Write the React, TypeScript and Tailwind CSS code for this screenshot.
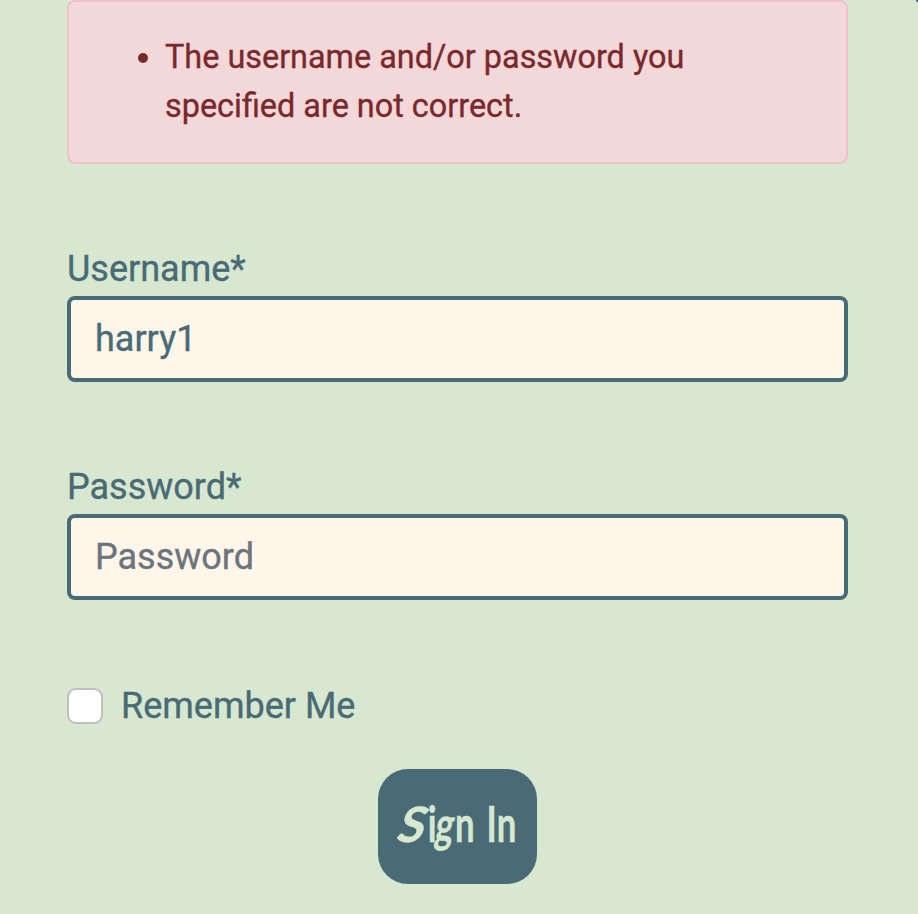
export default function App() {
  return (
    <main className="relative h-[914px] w-[918px] overflow-hidden bg-[#d8e7d0] pl-[67px] font-[Roboto,sans-serif] text-[36px] leading-[54px] text-[#486b76] [-webkit-text-stroke:0.35px]">
      <span className="absolute -right-px -top-px size-[3px] rounded-full bg-[#486b76]" />
      <div className="h-[164px] w-[781px] rounded-lg border-2 border-[#efc2c7] bg-[#f3d8da] pl-[96px] pt-[31px] text-[32.4px] leading-[49px] text-[#7b282c]">
        <ul className="list-disc">
          <li>The username and/or password you<br />specified are not correct.</li>
        </ul>
      </div>
      <form className="w-[781px]">
        <label htmlFor="username" className="mt-[78px] block">Username*</label>
        <input id="username" className="block h-[86px] w-full rounded-lg border-4 border-[#486b76] bg-[#fff6ea] px-[24px] outline-none" defaultValue="harry1" />
        <label htmlFor="password" className="mt-[78px] block">Password*</label>
        <input id="password" className="block h-[86px] w-full rounded-lg border-4 border-[#486b76] bg-[#fff6ea] px-[24px] outline-none placeholder:text-[#6c757d]" type="password" placeholder="Password" />
        <label className="mt-[79px] flex items-center gap-[18px]">
          <input type="checkbox" className="size-9 appearance-none rounded-[9px] border-2 border-[#bfbfbf] bg-white" />
          Remember Me
        </label>
        <button type="button" className="mx-auto mt-[36px] flex h-[115px] w-[159px] items-center justify-center rounded-[30px] bg-[#486b76] pb-[7px] pl-[4px] font-[Lato,sans-serif] text-[49px] font-bold text-[#d8e7d0]">
          <span className="flex shrink-0 scale-x-[0.71] items-baseline whitespace-pre"><span className="inline-block translate-x-[5px] -skew-x-[18deg] scale-x-[1.4] pr-[9px]">S</span><span>i</span><span className="inline-block -skew-x-12">g</span><span className="[word-spacing:5px]">n In</span></span>
        </button>
      </form>
    </main>
  );
}
